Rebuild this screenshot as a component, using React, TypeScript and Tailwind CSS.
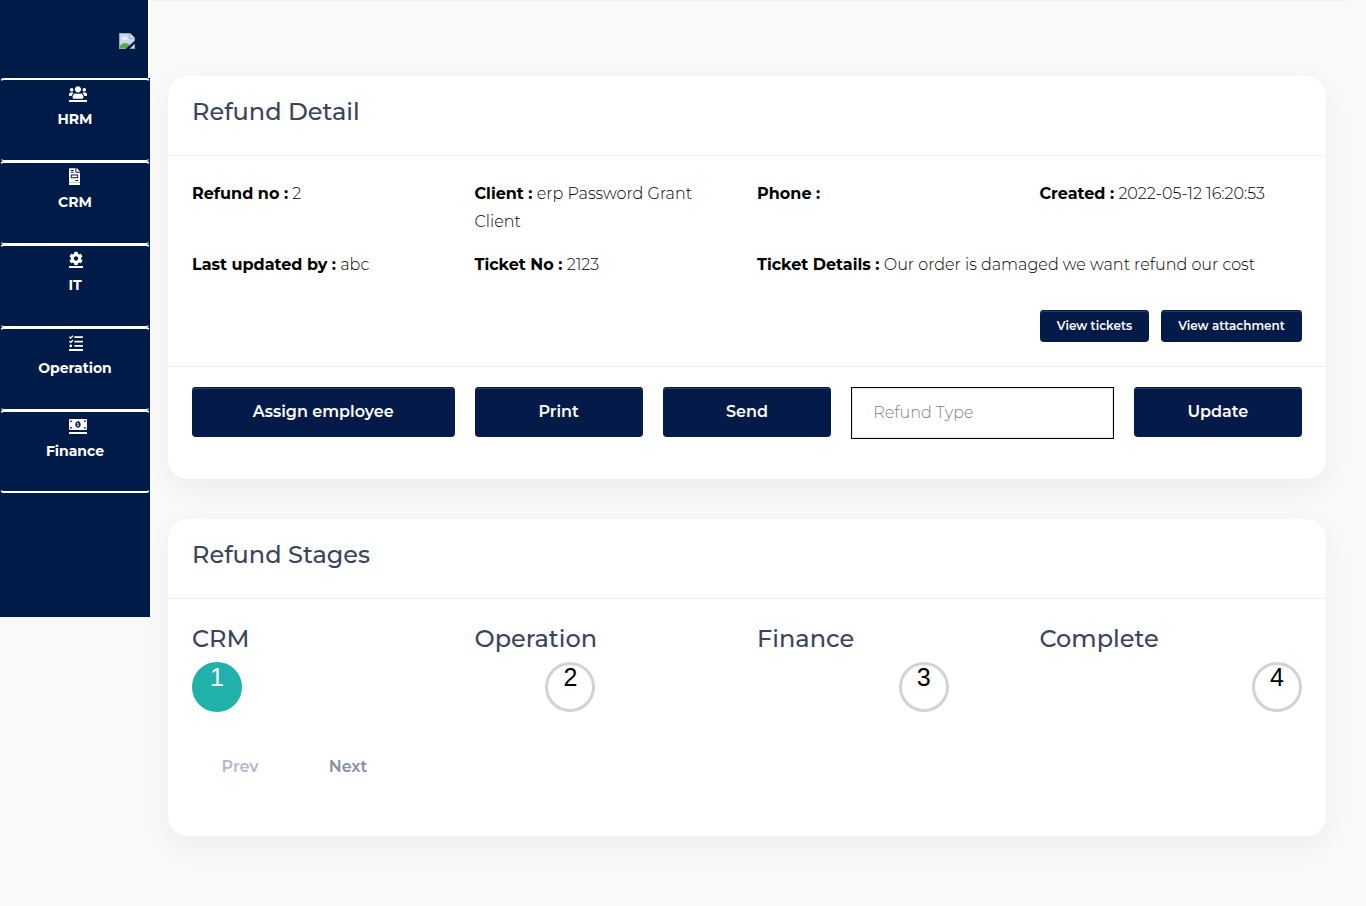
import type { ReactNode } from "react";
import type { IconType } from "react-icons";
import { FaCog, FaFileInvoice, FaMoneyBillAlt, FaTasks, FaUsers } from "react-icons/fa";

const modules: { label: string; icon: IconType; width: string }[] = [
  { label: "HRM", icon: FaUsers, width: "w-[18px]" },
  { label: "CRM", icon: FaFileInvoice, width: "w-[11px]" },
  { label: "IT", icon: FaCog, width: "w-[14px]" },
  { label: "Operation", icon: FaTasks, width: "w-[14px]" },
  { label: "Finance", icon: FaMoneyBillAlt, width: "w-[18px]" },
];

const details = [
  { label: "Refund no", value: "2", span: "col-span-3" },
  { label: "Client", value: "erp Password Grant Client", span: "col-span-3" },
  { label: "Phone", value: "", span: "col-span-3" },
  { label: "Created", value: "2022-05-12 16:20:53", span: "col-span-3" },
  { label: "Last updated by", value: "abc", span: "col-span-3" },
  { label: "Ticket No", value: "2123", span: "col-span-3" },
  {
    label: "Ticket Details",
    value: "Our order is damaged we want refund our cost",
    span: "col-span-6",
  },
];

const stages = ["CRM", "Operation", "Finance", "Complete"];

function MissingImage() {
  return (
    <svg width="16" height="16" viewBox="0 0 16 16" role="img" aria-label="Logo">
      <path d="M0 0h11l5 5v11H0z" fill="#a3a3a3" />
      <path d="M1 1h9.500v4.500H15V15H1z" fill="#c6d8f5" />
      <path d="M11 .5L15.500 5H11z" fill="#f4f4f4" stroke="#a3a3a3" strokeWidth=".7" />
      <path d="M3 6.200c0-1 .9-1.500 1.600-1.300.4-1.300 2.500-1.200 2.800.1.800 0 1.200.6 1.200 1.200z" fill="#fff" />
      <path d="M1 15v-2c2-3.600 8-4.500 10 0v2z" fill="#5aac3b" />
      <path d="M16 7.500v3L10.500 16H6.500z" fill="#001b48" />
    </svg>
  );
}

function Sidebar() {
  return (
    <aside className="h-[617px] w-[150px] shrink-0 bg-[#001b48]">
      <div className="flex h-[78px] justify-end border-r-2 border-white pt-[33px] pr-[13px]">
        <MissingImage />
      </div>
      <nav>
        {modules.map(({ label, icon: Icon, width }) => (
          <a
            key={label}
            href={"#" + label.toLowerCase()}
            className="block h-[83px] rounded border-x border-t-2 border-b border-x-transparent border-y-white pt-[5px] text-white last:border-b-2"
          >
            <span className="ml-[68px] block w-fit border-b-2 border-white">
              <Icon className={"h-[15px] " + width} />
            </span>
            <span className="mt-[7px] block text-center text-sm leading-5 font-bold">{label}</span>
          </a>
        ))}
      </nav>
    </aside>
  );
}

function Card({ title, children }: { title: string; children: ReactNode }) {
  return (
    <section className="rounded-[20px] bg-white shadow-[0_10px_30px_rgba(0,0,0,0.05)]">
      <h2 className="h-20 border-b border-[#f0f0f4] px-6 pt-5 text-2xl leading-8 font-medium text-[#3b455a]">
        {title}
      </h2>
      {children}
    </section>
  );
}

const solid =
  "rounded bg-[#041b4a] text-white shadow-[inset_0_1px_0_#041b4a,inset_0_2px_0_rgba(255,255,255,0.15)] cursor-pointer";

function Action({ label, span }: { label: string; span: string }) {
  return (
    <button type="button" className={"h-[50px] text-base font-semibold " + solid + " " + span}>
      {label}
    </button>
  );
}

function RefundDetail() {
  return (
    <Card title="Refund Detail">
      <dl className="grid grid-cols-12 gap-x-5 gap-y-[15px] px-6 pt-6 text-base leading-7 text-black">
        {details.map(({ label, value, span }) => (
          <div key={label} className={span}>
            <dt className="inline font-bold">{label} :</dt>{" "}
            <dd className="inline font-light">{value}</dd>
          </div>
        ))}
      </dl>
      <div className="flex justify-end gap-3 border-b border-[#ebedf5] px-6 pt-[31px] pb-6 text-xs font-semibold">
        <button type="button" className={"h-8 w-[109px] " + solid}>View tickets</button>
        <button type="button" className={"h-8 w-[141px] " + solid}>View attachment</button>
      </div>
      <div className="grid grid-cols-12 items-start gap-5 px-6 pt-5 pb-10">
        <Action label="Assign employee" span="col-span-3" />
        <Action label="Print" span="col-span-2" />
        <Action label="Send" span="col-span-2" />
        <input
          aria-label="Refund Type"
          placeholder="Refund Type"
          className="col-span-3 h-[52px] w-full min-w-0 border border-black bg-white px-[21px] pb-0.5 text-base font-light shadow-[inset_0_0_0_1px_#e2e5ec] placeholder:text-[#7d828a]"
        />
        <Action label="Update" span="col-span-2" />
      </div>
    </Card>
  );
}

function RefundStages() {
  return (
    <Card title="Refund Stages">
      <div className="px-6 pt-6 pb-11">
        <div className="grid grid-cols-4 gap-5">
          {stages.map((stage) => (
            <h3 key={stage} className="text-2xl leading-8 font-medium text-[#3b455a]">{stage}</h3>
          ))}
        </div>
        <ol className="mt-[7px] flex justify-between font-['Liberation_Sans',Arial,sans-serif] text-[25px] leading-6">
          {stages.map((stage, i) => (
            <li
              key={stage}
              className={
                "size-[50px] rounded-full border-[3px] text-center " +
                (i === 0
                  ? "border-[#20b2aa] bg-[#20b2aa] text-white"
                  : "border-[#d3d3d3] text-black")
              }
            >
              {i + 1}
            </li>
          ))}
        </ol>
        <div className="mt-[30px] flex gap-3 text-base font-semibold">
          <button type="button" disabled className="h-[50px] w-24 text-[#b3bac6]">Prev</button>
          <button type="button" className="h-[50px] w-24 cursor-pointer text-[#8390a5]">Next</button>
        </div>
      </div>
    </Card>
  );
}

export default function App() {
  return (
    <div className="flex min-h-screen items-start bg-[#f9f9f9] font-['Montserrat','Inter',sans-serif]">
      <Sidebar />
      <div className="min-w-0 flex-1">
        <div className="mr-5 h-px bg-[#efefef]" />
        <main className="flex flex-col gap-10 pt-[75px] pr-10 pb-16 pl-[18px]">
          <RefundDetail />
          <RefundStages />
        </main>
      </div>
    </div>
  );
}
